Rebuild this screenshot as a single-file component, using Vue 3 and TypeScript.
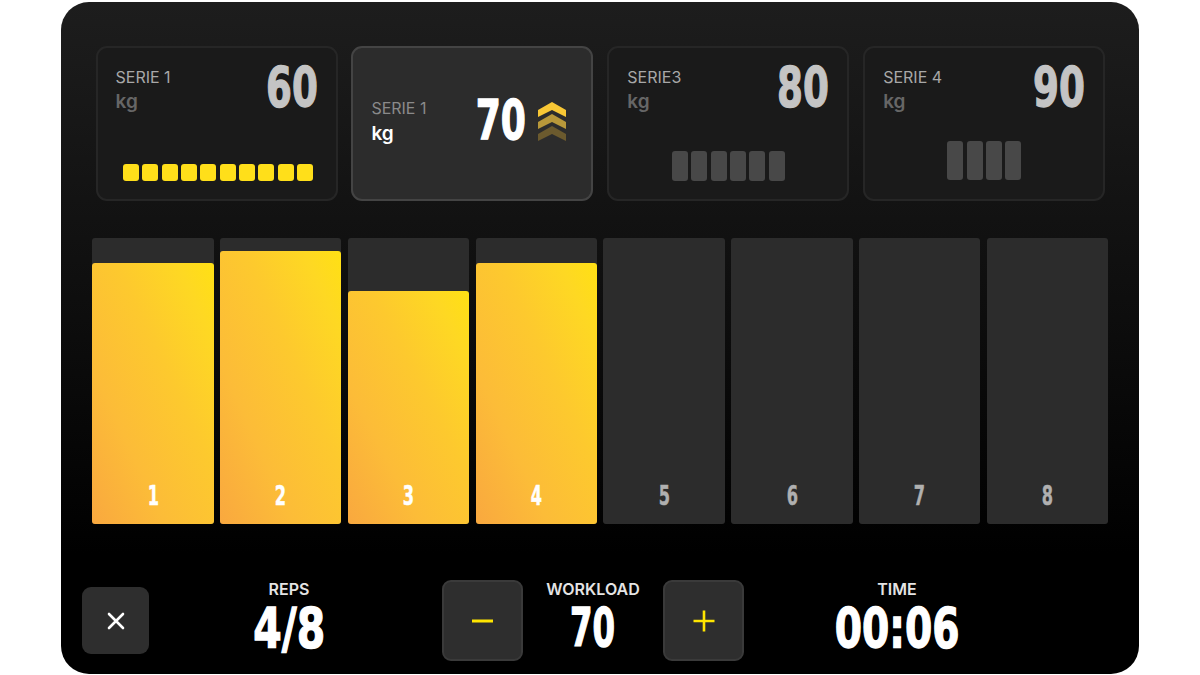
<script setup lang="ts">
interface Serie {
  label: string
  value: number
  active?: boolean
  segments?: number
  segClass?: string
}
const series: Serie[] = [
  { label: 'SERIE 1', value: 60, segments: 10, segClass: 'seg-done' },
  { label: 'SERIE 1', value: 70, active: true },
  { label: 'SERIE3', value: 80, segments: 6, segClass: 'seg-mid' },
  { label: 'SERIE 4', value: 90, segments: 4, segClass: 'seg-big' },
]
const bars: { n: number; fill: number }[] = [
  { n: 1, fill: 261 },
  { n: 2, fill: 273 },
  { n: 3, fill: 233 },
  { n: 4, fill: 261 },
  { n: 5, fill: 0 },
  { n: 6, fill: 0 },
  { n: 7, fill: 0 },
  { n: 8, fill: 0 },
]
</script>

<template>
  <div class="page">
    <main class="panel">
      <section class="cards">
        <article v-for="(s, i) in series" :key="i" class="card" :class="{ active: s.active }">
          <template v-if="s.active">
            <div class="titles">
              <div class="serie">{{ s.label }}</div>
              <div class="unit">kg</div>
            </div>
            <div class="num">{{ s.value }}</div>
            <svg class="chev" width="30" height="40" viewBox="0 0 30 40">
              <polygon points="1,8 15,0 29,8 29,15 15,8 1,15" fill="#f8c735" />
              <polygon points="1,20 15,12 29,20 29,27 15,20 1,27" fill="#b8983a" />
              <polygon points="1,32 15,24 29,32 29,39 15,32 1,39" fill="#6b5a2e" />
            </svg>
          </template>
          <template v-else>
            <div class="head">
              <div class="titles">
                <div class="serie">{{ s.label }}</div>
                <div class="unit">kg</div>
              </div>
              <div class="num">{{ s.value }}</div>
            </div>
            <div class="segs" :class="s.segClass">
              <span v-for="k in s.segments" :key="k" class="seg"></span>
            </div>
          </template>
        </article>
      </section>

      <section class="bars">
        <div v-for="b in bars" :key="b.n" class="bar">
          <div v-if="b.fill" class="fill" :style="{ height: b.fill + 'px' }"></div>
          <span class="bar-n">{{ b.n }}</span>
        </div>
      </section>

      <footer class="footer">
        <button class="btn close" aria-label="Close">
          <svg width="20" height="20" viewBox="0 0 20 20">
            <path d="M3 3 17 17M17 3 3 17" stroke="#fff" stroke-width="2.6" stroke-linecap="round" />
          </svg>
        </button>
        <div class="stat reps">
          <div class="stat-label">REPS</div>
          <div class="stat-value v-reps">4/8</div>
        </div>
        <button class="btn step minus" aria-label="Decrease">
          <svg width="22" height="4" viewBox="0 0 22 4"><rect y="0.5" width="21" height="3" fill="#ffe500" /></svg>
        </button>
        <div class="stat work">
          <div class="stat-label">WORKLOAD</div>
          <div class="stat-value v-work">70</div>
        </div>
        <button class="btn step" aria-label="Increase">
          <svg width="22" height="22" viewBox="0 0 22 22">
            <path d="M0.500 11H21.500M11 0.500V21.500" stroke="#ffe500" stroke-width="2.6" />
          </svg>
        </button>
        <div class="stat time">
          <div class="stat-label">TIME</div>
          <div class="stat-value v-time">00:06</div>
        </div>
      </footer>
    </main>
  </div>
</template>

<style>
html, body { margin: 0; background: #fff; }
</style>

<style scoped>
.page {
  width: 1200px;
  height: 675px;
  overflow: hidden;
  background: #fff;
  padding: 2px 61px 1px;
  box-sizing: border-box;
  font-family: Inter, "Liberation Sans", sans-serif;
}
.panel {
  height: 672px;
  box-sizing: border-box;
  border-radius: 28px;
  background: linear-gradient(180deg, #1d1d1d 0%, #0c0c0c 50%, #000 82%);
  padding: 44px 0 0 21px;
}
.cards {
  display: flex;
  gap: 13.900px;
  margin-left: 13.5px;
}
.card {
  width: 242px;
  height: 155px;
  box-sizing: border-box;
  border: 2px solid #262626;
  border-radius: 11px;
  background: #1a1a1a;
  padding: 17px 18px 18px;
  display: flex;
  flex-direction: column;
}
.card.active {
  flex-direction: row;
  align-items: center;
  background: #2c2c2c;
  border-color: #444;
}
.head {
  display: flex;
  justify-content: space-between;
  align-items: flex-start;
}
.titles { padding-top: 3px; }
.serie {
  font-size: 16px;
  line-height: 18px;
  color: #a8a8a8;
  white-space: nowrap;
}
.unit {
  font-size: 19px;
  line-height: 24px;
  margin-top: 4px;
  font-weight: 600;
  color: #666;
}
.num, .stat-value, .bar-n {
  font-family: "DejaVu Sans", sans-serif;
  font-weight: 700;
  display: inline-block;
  white-space: nowrap;
  -webkit-text-stroke: 1.4px currentColor;
}
.num {
  font-size: 56px;
  line-height: 52px;
  color: #c4c4c4;
  margin-top: -4px;
  transform: scaleX(0.665);
  transform-origin: right center;
}
.active .titles { padding-top: 0; margin-top: -2px; }
.active .serie { color: #8a8a8a; }
.active .unit { color: #fff; margin-top: 5px; }
.active .num {
  color: #fff;
  margin-left: 21px;
  margin-top: -7px;
  transform: scaleX(0.645);
}
.chev { margin-left: 12px; margin-top: -3px; }
.segs {
  margin-top: auto;
  display: flex;
  justify-content: center;
  gap: 3.3px;
}
.seg { display: block; border-radius: 3px; background: #484848; }
.seg-done { padding-left: 3px; }
.seg-done .seg { width: 16px; height: 17px; background: #ffdf1a; }
.seg-mid .seg { width: 16px; height: 30px; }
.seg-big .seg { width: 16px; height: 39px; margin-bottom: 1px; }
.bars {
  display: flex;
  gap: 6.400px;
  margin: 37px 0 0 10.300px;
}
.bar {
  position: relative;
  width: 121.400px;
  height: 286px;
  border-radius: 3px;
  background: #2c2c2c;
  display: flex;
  align-items: flex-end;
  justify-content: center;
}
.fill {
  position: absolute;
  left: 0;
  right: 0;
  bottom: 0;
  border-radius: 3px;
  background: linear-gradient(to top right, #f9a83f 0%, #fcbc38 30%, #fdc92e 60%, #fed823 85%, #ffe014 100%);
}
.bar-n {
  position: relative;
  font-size: 27px;
  line-height: 24px;
  margin-bottom: 16px;
  color: #fff;
  -webkit-text-stroke: 0.5px currentColor;
  transform: scaleX(0.6);
}
.bar:nth-child(n + 5) .bar-n { color: #b0b0b0; }
.footer {
  display: flex;
  align-items: center;
  margin-top: 56px;
  height: 81px;
}
.btn {
  padding: 0;
  display: flex;
  align-items: center;
  justify-content: center;
  background: #2e2e2e;
  border: 2px solid #3a3a3a;
  border-radius: 9px;
  box-sizing: border-box;
}
.close {
  width: 67px;
  height: 67px;
  border: 0;
  margin-right: 80px;
}
.step { width: 81px; height: 81px; }
.stat {
  display: flex;
  flex-direction: column;
  align-items: center;
  color: #fff;
  margin-top: -8.5px;
}
.reps { width: 120px; margin-right: 93px; }
.work { width: 140px; }
.time { width: 120px; margin-left: 93px; }
.stat-label {
  font-size: 16px;
  line-height: 18px;
  font-weight: 600;
  color: #e4e4e4;
}
.stat-value {
  font-size: 56px;
  line-height: 50px;
  margin-top: 5.5px;
}
.v-reps { transform: scaleX(0.73); }
.v-time { transform: scaleX(0.7); }
.v-work { font-size: 54px; transform: scaleX(0.6); }
</style>
